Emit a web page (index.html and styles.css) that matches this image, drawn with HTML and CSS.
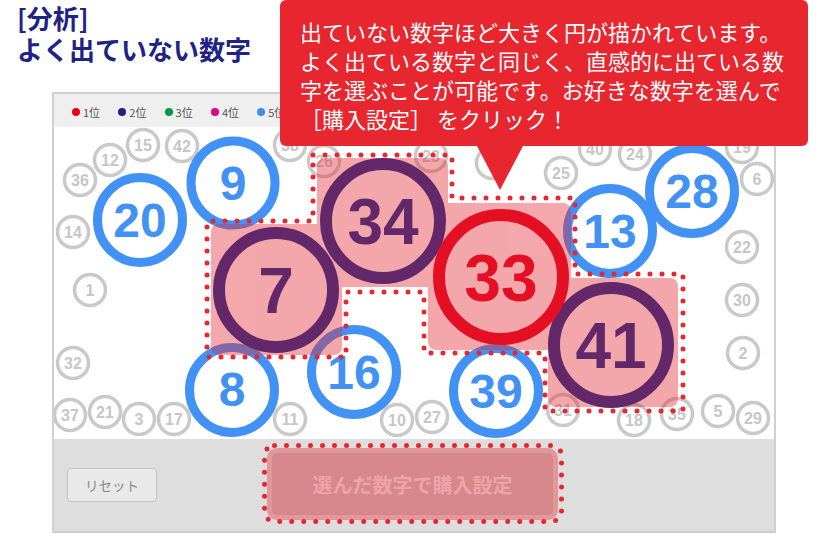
FILE: index.html
```html
<!DOCTYPE html>
<html lang="ja">
<head>
<meta charset="utf-8">
<title>よく出ていない数字</title>
<link rel="stylesheet" href="styles.css">
</head>
<body>
<h1 class="title"><span class="title-line">[分析]</span><span class="title-line">よく出ていない数字</span></h1>

<div class="panel">
  <div class="legend">
    <div class="legend-item"><span class="dot d1"></span>1位</div>
    <div class="legend-item"><span class="dot d2"></span>2位</div>
    <div class="legend-item"><span class="dot d3"></span>3位</div>
    <div class="legend-item"><span class="dot d4"></span>4位</div>
    <div class="legend-item"><span class="dot d5"></span>5位</div>
  </div>

  <svg class="board" width="720" height="312" viewBox="54 127 720 312">
    <g class="gray">
      <circle cx="143" cy="145" r="15.5"/><text x="143" y="151">15</text>
      <circle cx="182" cy="146" r="15.5"/><text x="182" y="152">42</text>
      <circle cx="110" cy="160" r="15.5"/><text x="110" y="166">12</text>
      <circle cx="80" cy="180" r="15.5"/><text x="80" y="186">36</text>
      <circle cx="73" cy="232" r="15.5"/><text x="73" y="238">14</text>
      <circle cx="90" cy="290" r="15.5"/><text x="90" y="296">1</text>
      <circle cx="73" cy="363" r="15.5"/><text x="73" y="369">32</text>
      <circle cx="70" cy="415" r="15.5"/><text x="70" y="421">37</text>
      <circle cx="105" cy="412" r="15.5"/><text x="105" y="418">21</text>
      <circle cx="139" cy="419" r="15.5"/><text x="139" y="425">3</text>
      <circle cx="174" cy="419" r="15.5"/><text x="174" y="425">17</text>
      <circle cx="290" cy="419" r="15.5"/><text x="290" y="425">11</text>
      <circle cx="397" cy="420" r="15.5"/><text x="397" y="426">10</text>
      <circle cx="432" cy="417" r="15.5"/><text x="432" y="423">27</text>
      <circle cx="563" cy="410" r="15.5"/><text x="563" y="416">31</text>
      <circle cx="634" cy="420" r="15.5"/><text x="634" y="426">18</text>
      <circle cx="677" cy="414" r="15.5"/><text x="677" y="420">35</text>
      <circle cx="718" cy="411" r="15.5"/><text x="718" y="417">5</text>
      <circle cx="753" cy="418" r="15.5"/><text x="753" y="424">29</text>
      <circle cx="743" cy="353" r="15.5"/><text x="743" y="359">2</text>
      <circle cx="742" cy="300" r="15.5"/><text x="742" y="306">30</text>
      <circle cx="742" cy="247" r="15.5"/><text x="742" y="253">22</text>
      <circle cx="757" cy="179" r="15.5"/><text x="757" y="185">6</text>
      <circle cx="742" cy="147" r="15.5"/><text x="742" y="153">19</text>
      <circle cx="635" cy="154" r="15.5"/><text x="635" y="160">24</text>
      <circle cx="595" cy="149" r="15.5"/><text x="595" y="155">40</text>
      <circle cx="561" cy="173" r="15.5"/><text x="561" y="179">25</text>
      <circle cx="492" cy="163" r="15.5"/><text x="492" y="169">4</text>
      <circle cx="431" cy="156" r="15.5"/><text x="431" y="162">23</text>
      <circle cx="324" cy="161" r="15.5"/><text x="324" y="167">26</text>
      <circle cx="290" cy="145" r="15.5"/><text x="290" y="151">38</text>
    </g>

    <g class="blue">
      <circle cx="140" cy="220" r="42.5"/><text x="140" y="237">20</text>
      <circle cx="233" cy="183" r="42"/><text x="233" y="200">9</text>
      <circle cx="692" cy="191" r="42.5"/><text x="692" y="208">28</text>
      <circle cx="610" cy="231" r="42.5"/><text x="610" y="248">13</text>
      <circle cx="232" cy="390" r="42.5"/><text x="232" y="406">8</text>
      <circle cx="354" cy="372" r="42.5"/><text x="354" y="389">16</text>
      <circle cx="496" cy="391" r="42.5"/><text x="496" y="408">39</text>
    </g>

    <g class="pink">
      <rect x="317" y="158" width="131" height="129" rx="8"/>
      <rect x="211" y="224" width="131" height="131" rx="8"/>
      <rect x="428" y="203" width="143" height="147" rx="8"/>
      <rect x="548" y="278" width="130" height="129" rx="8"/>
    </g>

    <g class="purple">
      <circle cx="383" cy="221" r="57"/><text x="383" y="244">34</text>
      <circle cx="276" cy="290" r="57"/><text x="276" y="313">7</text>
      <circle cx="611" cy="345" r="57"/><text x="611" y="368">41</text>
    </g>

    <g class="red">
      <circle cx="501" cy="277" r="62"/><text x="501" y="301">33</text>
    </g>

    <path class="dots" d="M313 155 H452 V198 H575 V274 H683 V411 H545 V353 H424 V292 H346 V357 H207 V221 H313 Z"/>
  </svg>

  <div class="actions">
    <button class="reset" type="button">リセット</button>
    <div class="buy-wrap">
      <button class="buy" type="button">選んだ数字で購入設定</button>
      <svg class="buy-outline" width="302" height="81" viewBox="0 0 302 81">
        <rect class="dots" x="2.5" y="2.5" width="297" height="76" rx="10"/>
      </svg>
    </div>
  </div>
</div>

<div class="bubble"><span class="bubble-line">出ていない数字ほど大きく円が描かれています。</span><span class="bubble-line">よく出ている数字と同じく、直感的に出ている数</span><span class="bubble-line">字を選ぶことが可能です。お好きな数字を選んで</span><span class="bubble-line">［購入設定］ をクリック！</span></div>
</body>
</html>
```

FILE: styles.css
```css
* { box-sizing: border-box; }

html, body {
  margin: 0;
  padding: 0;
}

body {
  width: 830px;
  height: 550px;
  position: relative;
  overflow: hidden;
  background: #ffffff;
  font-family: "Noto Sans CJK JP", "Noto Sans", sans-serif;
}

.title {
  margin: 0;
  padding: 2px 0 0 17px;
  font-size: 26px;
  font-weight: bold;
  color: #1e2384;
}

.title-line {
  display: block;
  height: 31px;
  line-height: 31px;
}

.panel {
  margin: 28px 0 0 52px;
  width: 724px;
  height: 441px;
  border: 2px solid #d0d0d0;
  display: flex;
  flex-direction: column;
}

.legend {
  flex: none;
  height: 33px;
  background: #efefef;
  display: flex;
  align-items: center;
  padding: 2px 0 0 18px;
}

.legend-item {
  flex: none;
  width: 46.3px;
  display: flex;
  align-items: center;
  gap: 3px;
  font-size: 11px;
  line-height: 14px;
  color: #555555;
}

.dot {
  display: block;
  width: 8px;
  height: 8px;
  border-radius: 50%;
}
.d1 { background: #e60012; }
.d2 { background: #1d2088; }
.d3 { background: #009944; }
.d4 { background: #e4007f; }
.d5 { background: #3f8ef2; }

.board {
  display: block;
  flex: none;
  background: #ffffff;
}

.board text {
  font-family: "Liberation Sans", Arial, sans-serif;
  font-weight: bold;
  text-anchor: middle;
}

.gray circle {
  fill: none;
  stroke: #c9c9c9;
  stroke-width: 3.5;
}
.gray text {
  fill: #c6c6c6;
  font-size: 16px;
}

.blue circle {
  fill: none;
  stroke: #4292f5;
  stroke-width: 9;
}
.blue text {
  fill: #4292f5;
  font-size: 48px;
}

.pink {
  fill: #e4262f;
  opacity: 0.4;
}

.purple circle {
  fill: none;
  stroke: #622869;
  stroke-width: 12;
}
.purple text {
  fill: #622869;
  font-size: 64px;
}

.red circle {
  fill: none;
  stroke: #e50f23;
  stroke-width: 12;
}
.red text {
  fill: #e50f23;
  font-size: 66px;
}

.dots {
  fill: none;
  stroke: #e8262f;
  stroke-width: 5;
  stroke-linecap: round;
  stroke-dasharray: 0 12;
}

.actions {
  flex: 1;
  background: #dedede;
  display: flex;
  align-items: center;
  padding-left: 13px;
}

.reset {
  flex: none;
  width: 90px;
  height: 34px;
  margin: 0;
  padding: 0;
  border: 1px solid #c4c4c4;
  border-radius: 4px;
  background: #e9e9e9;
  color: #888888;
  font-family: "Noto Sans CJK JP", sans-serif;
  font-size: 13.5px;
}

.buy-wrap {
  flex: none;
  position: relative;
  margin-left: 110px;
  margin-top: -2px;
}

.buy {
  display: block;
  width: 291px;
  height: 72px;
  margin: 0;
  padding: 0;
  border: 5px solid #e2989b;
  border-radius: 10px;
  background: #d6878b;
  color: #eea4a7;
  font-family: "Noto Sans CJK JP", sans-serif;
  font-size: 20px;
  font-weight: bold;
}

.buy-outline {
  position: absolute;
  left: -5px;
  top: -5px;
}

.bubble {
  position: absolute;
  left: 280px;
  top: 0;
  width: 528px;
  height: 146px;
  padding: 17px 0 0 20px;
  background: #e8262f;
  border-radius: 6px;
  color: #ffffff;
  font-size: 22px;
  white-space: nowrap;
}

.bubble-line {
  display: block;
  height: 29px;
  line-height: 29px;
}

.bubble::after {
  content: "";
  position: absolute;
  left: 197px;
  top: 146px;
  width: 46px;
  height: 44px;
  background: #e8262f;
  clip-path: polygon(0 0, 100% 0, 50% 100%);
}
```
